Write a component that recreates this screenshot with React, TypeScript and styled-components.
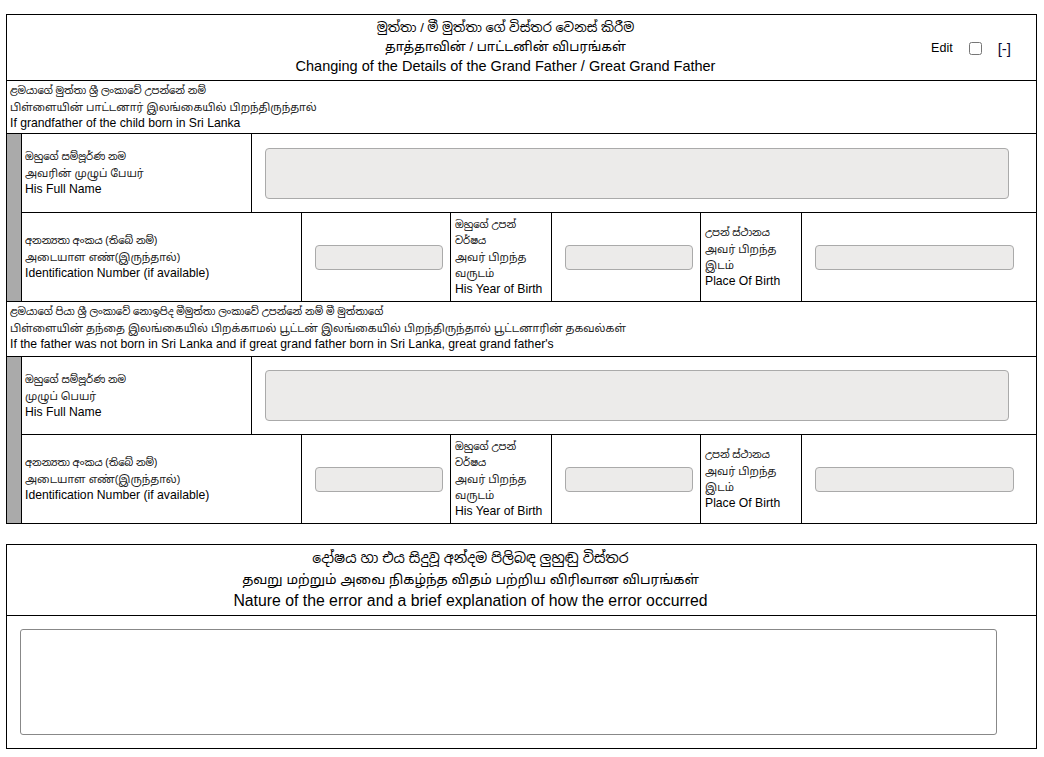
import React from "react";
import styled, { createGlobalStyle } from "styled-components";

const GlobalStyle = createGlobalStyle`
  html, body {
    margin: 0;
    padding: 0;
    background: #fff;
  }
  body {
    font-family: "Liberation Sans", Arial, "Noto Sans Sinhala", "Noto Sans Tamil", sans-serif;
    color: #000;
  }
  * {
    box-sizing: border-box;
  }
`;

const Page = styled.div`
  padding: 14px 0 0 6px;
`;

const Panel = styled.div<{ $gap?: number }>`
  width: 1031px;
  border: 1px solid #000;
  margin-top: ${(p) => p.$gap || 0}px;
`;

const TitleRow = styled.div`
  display: grid;
  height: 66px;
  border-bottom: 1px solid #000;
`;

const Title = styled.div`
  grid-area: 1 / 1;
  padding: 4px 32px 0 0;
  text-align: center;
`;

const TitleLine = styled.div<{ $size: number; $lh: number }>`
  font-size: ${(p) => p.$size}px;
  line-height: ${(p) => p.$lh}px;
  white-space: nowrap;
`;

const Controls = styled.div`
  grid-area: 1 / 1;
  justify-self: end;
  align-self: center;
  display: flex;
  align-items: center;
  gap: 16px;
  padding: 1px 25px 0 0;
  font-size: 12.5px;
`;

const Check = styled.input`
  width: 13px;
  height: 13px;
  margin: 0;
`;

const Toggle = styled.span`
  font-size: 15px;
  color: #0a0a30;
`;

const SectionHead = styled.div<{ $h: number }>`
  height: ${(p) => p.$h}px;
  padding: 2px 3px 0;
  border-bottom: 1px solid #000;
`;

const Si = styled.div`
  font-size: 10px;
  line-height: 16px;
  white-space: nowrap;
`;

const Ta = styled.div`
  font-size: 10.8px;
  line-height: 16px;
  color: #222;
  white-space: nowrap;
`;

const En = styled.div`
  font-size: 12.2px;
  line-height: 16px;
  white-space: nowrap;
`;

const Group = styled.div<{ $last?: boolean }>`
  display: grid;
  grid-template-columns: 14px 1fr;
  border-bottom: ${(p) => (p.$last ? "none" : "1px solid #000")};
`;

const Stripe = styled.div`
  background: #aaa;
`;

const Rows = styled.div`
  border-left: 1px solid #000;
`;

const Row = styled.div<{ $cols: string; $h: number }>`
  display: grid;
  grid-template-columns: ${(p) => p.$cols};
  height: ${(p) => p.$h}px;
  & + & {
    border-top: 1px solid #000;
  }
`;

const LabelCell = styled.div<{ $first?: boolean; $top?: boolean }>`
  display: flex;
  flex-direction: column;
  justify-content: ${(p) => (p.$top ? "flex-start" : "center")};
  padding: ${(p) => (p.$top ? "4px 4px 0" : "0 4px")};
  padding-left: ${(p) => (p.$first ? 3 : 4)}px;
  border-left: ${(p) => (p.$first ? "none" : "1px solid #000")};
`;

const InputCell = styled.div<{ $top?: number }>`
  display: flex;
  align-items: ${(p) => (p.$top ? "flex-start" : "center")};
  padding: ${(p) => p.$top || 0}px 0 0 13px;
  border-left: 1px solid #000;
`;

const Field = styled.div<{ $w: number; $h: number }>`
  width: ${(p) => p.$w}px;
  height: ${(p) => p.$h}px;
  background: #ecebea;
  border: 1px solid #aaa;
  border-radius: 4px;
`;

const ErrorHead = styled.div`
  height: 71px;
  padding: 3px 102px 0 0;
  border-bottom: 1px solid #000;
  text-align: center;
`;

const ErrorBody = styled.div`
  padding: 13px 0 13px 13px;
`;

const TextBox = styled.textarea`
  display: block;
  width: 977px;
  height: 106px;
  border: 1px solid #888;
  border-radius: 3px;
  resize: none;
  background: #fff;
`;

type Trio = { si: string[]; ta: string[]; en: string };

const Lines = ({ si, ta, en }: Trio) => (
  <>
    {si.map((s) => (
      <Si key={s}>{s}</Si>
    ))}
    {ta.map((t) => (
      <Ta key={t}>{t}</Ta>
    ))}
    <En>{en}</En>
  </>
);

const nameCols = "229px 1fr";
const idCols = "279px 149px 101px 149px 101px 1fr";

type PersonProps = { tamilName: string; nameH: number; last?: boolean };

const PersonRows = ({ tamilName, nameH, last }: PersonProps) => (
  <Group $last={last}>
    <Stripe />
    <Rows>
      <Row $cols={nameCols} $h={nameH}>
        <LabelCell $first>
          <Lines si={["ඔහුගේ සම්පූර්ණ නම"]} ta={[tamilName]} en="His Full Name" />
        </LabelCell>
        <InputCell $top={nameH - 64}>
          <Field $w={744} $h={51} />
        </InputCell>
      </Row>
      <Row $cols={idCols} $h={89}>
        <LabelCell $first>
          <Lines
            si={["අනන්‍යතා අංකය (තිබේ නම්)"]}
            ta={["அடையாள எண்(இருந்தால்)"]}
            en="Identification Number (if available)"
          />
        </LabelCell>
        <InputCell>
          <Field $w={128} $h={25} />
        </InputCell>
        <LabelCell $top>
          <Lines
            si={["ඔහුගේ උපන්", "වර්ෂය"]}
            ta={["அவர் பிறந்த", "வருடம்"]}
            en="His Year of Birth"
          />
        </LabelCell>
        <InputCell>
          <Field $w={128} $h={25} />
        </InputCell>
        <LabelCell>
          <Lines si={["උපන් ස්ථානය"]} ta={["அவர் பிறந்த", "இடம்"]} en="Place Of Birth" />
        </LabelCell>
        <InputCell>
          <Field $w={199} $h={25} />
        </InputCell>
      </Row>
    </Rows>
  </Group>
);

export default function App() {
  return (
    <Page>
      <GlobalStyle />
      <Panel>
        <TitleRow>
          <Title>
            <TitleLine $size={13} $lh={18}>
              මුත්තා / මී මුත්තා ගේ විස්තර වෙනස් කිරීම
            </TitleLine>
            <TitleLine $size={13} $lh={19}>
              தாத்தாவின் / பாட்டனின் விபரங்கள்
            </TitleLine>
            <TitleLine $size={14.5} $lh={20}>
              Changing of the Details of the Grand Father / Great Grand Father
            </TitleLine>
          </Title>
          <Controls>
            <span>Edit</span>
            <Check type="checkbox" />
            <Toggle>[-]</Toggle>
          </Controls>
        </TitleRow>

        <SectionHead $h={53}>
          <Lines
            si={["ළමයාගේ මුත්තා ශ්‍රී ලංකාවේ උපන්නේ නම්"]}
            ta={["பிள்ளையின் பாட்டனார் இலங்கையில் பிறந்திருந்தால்"]}
            en="If grandfather of the child born in Sri Lanka"
          />
        </SectionHead>
        <PersonRows tamilName="அவரின் முழுப் பேயர்" nameH={78} />

        <SectionHead $h={55}>
          <Lines
            si={["ළමයාගේ පියා ශ්‍රී ලංකාවේ නොඉපිද මීමුත්තා ලංකාවේ උපන්නේ නම් මී මුත්තාගේ"]}
            ta={["பிள்ளையின் தந்தை இலங்கையில் பிறக்காமல் பூட்டன் இலங்கையில் பிறந்திருந்தால் பூட்டனாரின் தகவல்கள்"]}
            en="If the father was not born in Sri Lanka and if great grand father born in Sri Lanka, great grand father's"
          />
        </SectionHead>
        <PersonRows tamilName="முழுப் பெயர்" nameH={77} last />
      </Panel>

      <Panel $gap={20}>
        <ErrorHead>
          <TitleLine $size={14} $lh={21}>
            දෝෂය හා එය සිදුවූ අන්දම පිලිබඳ ලුහුඬු විස්තර
          </TitleLine>
          <TitleLine $size={13.5} $lh={21}>
            தவறு மற்றும் அவை நிகழ்ந்த விதம் பற்றிய விரிவான விபரங்கள்
          </TitleLine>
          <TitleLine $size={15.8} $lh={22}>
            Nature of the error and a brief explanation of how the error occurred
          </TitleLine>
        </ErrorHead>
        <ErrorBody>
          <TextBox />
        </ErrorBody>
      </Panel>
    </Page>
  );
}
